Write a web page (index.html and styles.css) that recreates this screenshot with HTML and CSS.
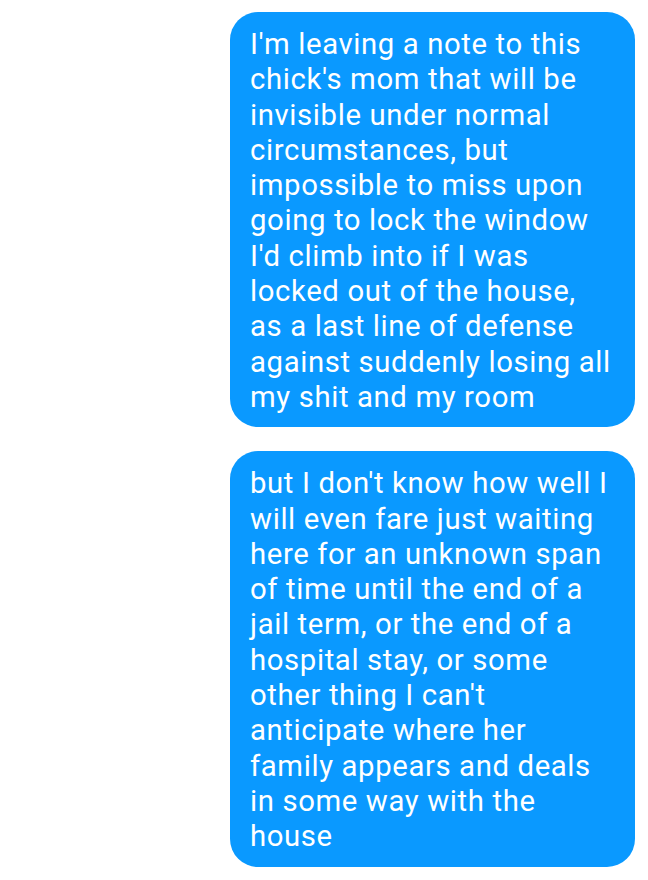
FILE: index.html
```html
<!DOCTYPE html>
<html>
<head>
<meta charset="utf-8">
<link rel="stylesheet" href="styles.css">
</head>
<body>
<div class="thread">
  <div class="bubble">I'm leaving a note to this<br>chick's mom that will be<br>invisible under normal<br>circumstances, but<br>impossible to miss upon<br>going to lock the window<br>I'd climb into if I was<br>locked out of the house,<br>as a last line of defense<br>against suddenly losing all<br>my shit and my room</div>
  <div class="bubble">but I don't know how well I<br>will even fare just waiting<br>here for an unknown span<br>of time until the end of a<br>jail term, or the end of a<br>hospital stay, or some<br>other thing I can't<br>anticipate where her<br>family appears and deals<br>in some way with the<br>house</div>
</div>
</body>
</html>
```
FILE: styles.css
```css
html, body {
  margin: 0;
  padding: 0;
  background: #ffffff;
}
.thread {
  display: flex;
  flex-direction: column;
  align-items: flex-end;
  gap: 24px;
  padding: 12px 13px 0 0;
}
.bubble {
  box-sizing: border-box;
  width: 405px;
  background: #0a99ff;
  color: #ffffff;
  border-radius: 28px;
  padding: 15px 10px 12px 20px;
  font-family: Roboto, "Noto Sans", sans-serif;
  font-size: 29.3px;
  line-height: 35.3px;
  letter-spacing: 0.62px;
  white-space: nowrap;
}
```
